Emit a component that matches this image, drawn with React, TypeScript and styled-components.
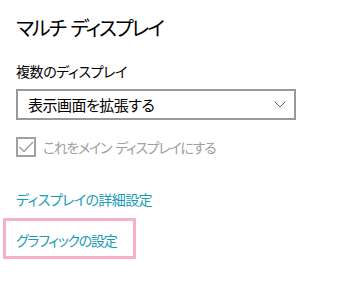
import * as React from 'react';
import styled, { createGlobalStyle } from 'styled-components';

const GlobalStyle = createGlobalStyle`
  html, body {
    margin: 0;
    padding: 0;
    background: #ffffff;
  }
  body {
    font-family: "Noto Sans CJK JP", "Noto Sans", sans-serif;
    font-feature-settings: "palt";
  }
`;

const Page = styled.div`
  width: 343px;
  height: 281px;
  box-sizing: border-box;
  padding: 13px 0 0 16px;
  display: flex;
  flex-direction: column;
  align-items: flex-start;
  color: #000;
  white-space: nowrap;
`;

const Title = styled.h2`
  margin: 0;
  font-size: 20px;
  font-weight: 400;
  line-height: 29px;
  letter-spacing: -2px;
  word-spacing: 3px;
`;

const Label = styled.div`
  margin-top: 19px;
  font-size: 14px;
  line-height: 20px;
  letter-spacing: -0.4px;
`;

const Select = styled.div`
  margin-top: 8px;
  width: 280px;
  height: 31px;
  box-sizing: border-box;
  border: 2px solid #999999;
  display: flex;
  align-items: center;
  justify-content: space-between;
  padding: 0 8px 0 10px;
  font-size: 15px;
  letter-spacing: -0.5px;
`;

const CheckRow = styled.div`
  margin-top: 17px;
  display: flex;
  align-items: center;
  gap: 7px;
  color: #a0a0a0;
  font-size: 14px;
  letter-spacing: -1.3px;
  word-spacing: 2px;
`;

const Box = styled.div`
  width: 20px;
  height: 20px;
  box-sizing: border-box;
  border: 2px solid #a0a0a0;
  display: flex;
  align-items: center;
  justify-content: center;
`;

const Link = styled.a<{ $tight?: boolean }>`
  display: block;
  color: #1a9bb7;
  font-size: 14px;
  line-height: 20px;
  letter-spacing: ${(p) => (p.$tight ? '-1.3px' : '-0.6px')};
  text-decoration: none;
  cursor: pointer;
`;

const FirstLink = styled(Link)`
  margin-top: 32px;
`;

const FocusFrame = styled.div`
  margin: 9px 0 0 -13px;
  padding: 9px 10px 6px 10px;
  border: 3px solid #f4b0cc;
  width: 133px;
  box-sizing: border-box;
`;

export default function App() {
  return (
    <>
      <GlobalStyle />
      <Page>
        <Title>マルチ ディスプレイ</Title>
        <Label>複数のディスプレイ</Label>
        <Select>
          <span>表示画面を拡張する</span>
          <svg width="12" height="7" viewBox="0 0 12 7">
            <path d="M0.5 0.5 L6 6 L11.5 0.5" fill="none" stroke="#666" strokeWidth="1" />
          </svg>
        </Select>
        <CheckRow>
          <Box>
            <svg width="16" height="16" viewBox="0 0 16 16">
              <path d="M1.5 8 L6 12.5 L15 3" fill="none" stroke="#a0a0a0" strokeWidth="1.5" />
            </svg>
          </Box>
          <span>これをメイン ディスプレイにする</span>
        </CheckRow>
        <FirstLink>ディスプレイの詳細設定</FirstLink>
        <FocusFrame>
          <Link $tight>グラフィックの設定</Link>
        </FocusFrame>
      </Page>
    </>
  );
}
